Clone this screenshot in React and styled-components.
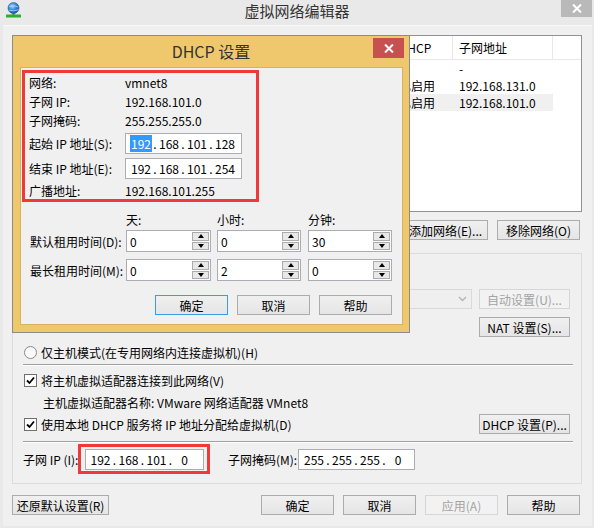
import React from 'react';
import styled, { createGlobalStyle } from 'styled-components';

const GlobalStyle = createGlobalStyle`
  * { box-sizing: border-box; }
  body {
    margin: 0;
    background: #e9e9e9;
    font-family: "Microsoft YaHei", "Noto Sans CJK SC", "Noto Sans", sans-serif;
    font-size: 12px;
    color: #000;
  }
`;

const Window = styled.div`
  position: relative;
  width: 594px;
  height: 528px;
  background: #e9e9e9;
  display: flex;
  flex-direction: column;
  overflow: hidden;
`;

const TitleBar = styled.div`
  height: 25px;
  display: grid;
  grid-template-columns: 1fr auto 1fr;
  align-items: start;
`;

const AppIcon = styled.svg`
  margin: 2px 0 0 6px;
`;

const Title = styled.div`
  font-size: 15px;
  line-height: 22px;
  color: #333;
  white-space: nowrap;
`;

const CloseBtn = styled.div`
  justify-self: end;
  width: 31px;
  height: ${(p) => (p.$red ? 20 : 17)}px;
  margin-right: ${(p) => (p.$red ? 5 : 2)}px;
  margin-top: ${(p) => (p.$red ? 2 : 0)}px;
  background: ${(p) => (p.$red ? '#c75050' : '#b9b9b9')};
  display: flex;
  align-items: center;
  justify-content: center;
`;

const Client = styled.div`
  flex: 1;
  margin: 0 2px 2px 3px;
  background: #f0f0f0;
  border-top: 1px solid #f8f8f8;
  padding: 9px 10px 0 9px;
  display: flex;
  flex-direction: column;
`;

const ListBox = styled.div`
  height: 177px;
  border: 1px solid #8f9296;
  background: #fff;
  overflow: hidden;
`;

const ListRow = styled.div`
  display: flex;
  height: ${(p) => (p.$head ? 24 : 17)}px;
  align-items: center;
  width: ${(p) => (p.$head ? 'auto' : '540px')};
  background: ${(p) => (p.$selected ? '#f0f0f0' : 'transparent')};
  border-bottom: ${(p) => (p.$head ? '1px solid #e5e9ef' : 'none')};
`;

const Cell = styled.div`
  width: ${(p) => p.$w}px;
  flex-shrink: 0;
  padding-left: 6px;
  white-space: nowrap;
  overflow: hidden;
  height: 100%;
  display: flex;
  align-items: center;
  border-right: ${(p) => (p.$head ? '1px solid #e8e8e8' : 'none')};
`;

const ButtonRow = styled.div`
  display: flex;
  justify-content: ${(p) => p.$justify || 'flex-end'};
  align-items: center;
  gap: 9px;
  margin-top: ${(p) => p.$mt || 0}px;
  padding-right: ${(p) => (p.$pr === undefined ? 2 : p.$pr)}px;
`;

const Group = styled.div`
  display: flex;
  gap: 9px;
`;

const Button = styled.button`
  width: ${(p) => p.$w}px;
  height: 20px;
  padding: 0;
  font: inherit;
  font-size: 12px;
  color: ${(p) => (p.disabled ? '#a3a3a3' : '#000')};
  border: 1px solid ${(p) => (p.$focus ? '#3c9be8' : p.disabled ? '#d6d6d6' : '#acacac')};
  background: ${(p) => (p.disabled ? '#f2f2f2' : 'linear-gradient(#f0f0f0, #e5e5e5)')};
  white-space: nowrap;
  display: flex;
  align-items: center;
  justify-content: center;
`;

const GroupBox = styled.div`
  position: relative;
  margin-top: 13px;
  width: 570px;
  height: 231px;
  border: 1px solid #dcdcdc;
  padding: 0 11px;
  display: flex;
  flex-direction: column;
`;

const GroupTitle = styled.span`
  position: absolute;
  top: -9px;
  left: 8px;
  padding: 0 2px;
  background: #f0f0f0;
  line-height: 17px;
`;

const Row = styled.div`
  height: ${(p) => p.$h}px;
  margin-top: ${(p) => p.$mt || 0}px;
  padding-left: ${(p) => p.$pl || 0}px;
  display: flex;
  align-items: center;
  justify-content: ${(p) => (p.$spread ? 'space-between' : 'flex-start')};
  white-space: nowrap;
`;

const Option = styled.label`
  display: flex;
  align-items: center;
  gap: 4px;
  align-self: ${(p) => (p.$top ? 'flex-start' : 'auto')};
  line-height: ${(p) => (p.$top ? '14px' : 'normal')};
`;

const Radio = styled.span`
  width: 13px;
  height: 13px;
  border-radius: 50%;
  border: 1px solid #8a8a8a;
  background: linear-gradient(#f4f4f4, #ffffff);
`;

const CheckBox = styled.span`
  width: 13px;
  height: 13px;
  border: 1px solid #707070;
  background: #fff;
  display: flex;
  align-items: center;
  justify-content: center;
`;

const Separator = styled.div`
  margin: ${(p) => p.$mt || 0}px -3px 0 -1px;
  height: 2px;
  border-top: 1px solid #a0a0a0;
  border-bottom: 1px solid #ffffff;
`;

const Select = styled.div`
  flex: 1;
  height: 20px;
  margin: 0 7px 0 8px;
  border: 1px solid #d9d9d9;
  background: #efefef;
  display: flex;
  align-items: center;
  justify-content: flex-end;
  padding-right: 4px;
`;

const FieldLabel = styled.span`
  width: ${(p) => p.$w}px;
  margin-left: ${(p) => p.$ml || 0}px;
  flex-shrink: 0;
  white-space: nowrap;
`;

const Highlight = styled.div`
  width: 132px;
  height: 30px;
  border: 3px solid #f03a3a;
  display: flex;
  align-items: center;
  justify-content: center;
  margin-right: 18px;
`;

const IpBox = styled.div`
  width: ${(p) => p.$w}px;
  height: 21px;
  flex-shrink: 0;
  border: 1px solid #abadb3;
  background: #fff;
  padding-left: 3px;
  display: flex;
  align-items: center;
`;

const IpField = styled.span`
  width: 24px;
  text-align: center;
`;

const IpDot = styled.span`
  width: 4px;
  text-align: center;
`;

const IpText = styled.span`
  background: ${(p) => (p.$selected ? '#3399ff' : 'transparent')};
  color: ${(p) => (p.$selected ? '#fff' : '#000')};
  padding: 0 1px;
  line-height: 15px;
`;

/* DHCP dialog, a second window lying over the editor */
const Dialog = styled.div`
  position: absolute;
  left: 12px;
  top: 35px;
  width: 398px;
  height: 298px;
  border: 1px solid #8c8c8c;
  background: #efc86d;
  display: flex;
  flex-direction: column;
`;

const DialogTitleBar = styled.div`
  height: 31px;
  display: grid;
  grid-template-columns: 1fr auto 1fr;
  align-items: start;
`;

const DialogTitle = styled.div`
  font-size: 16px;
  line-height: 31px;
  color: #333;
`;

const DialogClient = styled.div`
  flex: 1;
  margin: 0 6px 7px 7px;
  background: #f0f0f0;
  border: 1px solid #d8b35c;
  padding: 2px 0 0 1px;
  display: flex;
  flex-direction: column;
`;

const InfoBox = styled.div`
  width: 237px;
  height: 132px;
  border: 3px solid #f03a3a;
  padding-left: 4px;
  display: flex;
  flex-direction: column;
`;

const InfoRow = styled.div`
  display: flex;
  align-items: center;
  height: ${(p) => p.$h || 19}px;
  margin-top: ${(p) => p.$mt || 0}px;
  white-space: nowrap;
`;

const LeaseRow = styled.div`
  display: flex;
  align-items: center;
  height: ${(p) => p.$h || 22}px;
  margin-top: ${(p) => p.$mt || 0}px;
  padding-left: 8px;
  white-space: nowrap;
`;

const LeaseCol = styled.div`
  width: ${(p) => p.$w}px;
  margin-right: ${(p) => p.$mr || 0}px;
  flex-shrink: 0;
`;

const SpinBox = styled.div`
  width: ${(p) => p.$w}px;
  margin-right: ${(p) => p.$mr || 0}px;
  flex-shrink: 0;
  height: 22px;
  border: 1px solid #abadb3;
  background: #fff;
  padding: 1px 1px 1px 3px;
  display: flex;
  align-items: center;
  justify-content: space-between;
`;

const SpinButtons = styled.div`
  width: 17px;
  height: 100%;
  display: flex;
  flex-direction: column;
  gap: 1px;
`;

const SpinHalf = styled.div`
  flex: 1;
  border: 1px solid #acacac;
  background: #e8e8e8;
  display: flex;
  align-items: center;
  justify-content: center;
  &::after {
    content: '';
    border-left: 3px solid transparent;
    border-right: 3px solid transparent;
    ${(p) => (p.$up ? 'border-bottom: 4px solid #000;' : 'border-top: 4px solid #000;')}
  }
`;

const Ip = ({ parts, width, selected }) => (
  <IpBox $w={width}>
    {parts.map((part, i) => (
      <React.Fragment key={i}>
        {i > 0 && <IpDot>.</IpDot>}
        <IpField>
          <IpText $selected={selected === i}>{part}</IpText>
        </IpField>
      </React.Fragment>
    ))}
  </IpBox>
);

// day / hour / minute boxes: widths and gaps as in the dialog
const leaseCols = [
  { w: 85, mr: 6 },
  { w: 84, mr: 7 },
  { w: 84, mr: 0 },
];

const Spin = ({ value, col }) => (
  <SpinBox $w={col.w} $mr={col.mr}>
    <span>{value}</span>
    <SpinButtons>
      <SpinHalf $up />
      <SpinHalf />
    </SpinButtons>
  </SpinBox>
);

const Check = () => (
  <CheckBox>
    <svg width="9" height="9" viewBox="0 0 9 9">
      <path d="M1 4.5 L3.5 7 L8 1.5" fill="none" stroke="#000" strokeWidth="1.8" />
    </svg>
  </CheckBox>
);

const CloseX = () => (
  <svg width="10" height="9" viewBox="0 0 10 9">
    <path d="M1 0.5 L9 8.5 M9 0.5 L1 8.5" stroke="#fff" strokeWidth="2" />
  </svg>
);

const networks = [
  ['VMnet0', '桥接模式', '自动桥接', '-', '-', '-'],
  ['VMnet1', '仅主机模式', '-', '已连接', '已启用', '192.168.131.0'],
  ['VMnet8', 'NAT 模式', 'NAT 模式', '已连接', '已启用', '192.168.101.0'],
];

const columns = [
  { title: '名称', w: 80 },
  { title: '类型', w: 90 },
  { title: '外部连接', w: 120 },
  { title: '主机连接', w: 90 },
  { title: 'DHCP', w: 60 },
  { title: '子网地址', w: 100 },
];

const App = () => {
  return (
    <Window>
      <GlobalStyle />
      <TitleBar>
        <AppIcon width="15" height="16" viewBox="0 0 15 16">
          <defs>
            <radialGradient id="globe" cx="0.4" cy="0.35" r="0.7">
              <stop offset="0" stopColor="#9fd3ff" />
              <stop offset="0.5" stopColor="#3b86d8" />
              <stop offset="1" stopColor="#1d4f9c" />
            </radialGradient>
          </defs>
          <rect x="6.5" y="10" width="2" height="3" fill="#666" />
          <circle cx="7.5" cy="6" r="5.5" fill="url(#globe)" stroke="#2a5a9a" strokeWidth="0.6" />
          <path d="M3 4.5 C5 3.5 9 3.5 12 5 M3 8 C5 9 10 9 12.5 7.5" stroke="#bfe3ff" strokeWidth="0.7" fill="none" />
          <rect x="0" y="12.5" width="15" height="3" rx="0.5" fill="#27b02a" />
        </AppIcon>
        <Title>虚拟网络编辑器</Title>
        <CloseBtn>
          <CloseX />
        </CloseBtn>
      </TitleBar>

      <Client>
        <ListBox>
          <ListRow $head>
            {columns.map((c) => (
              <Cell key={c.title} $w={c.w} $head>{c.title}</Cell>
            ))}
          </ListRow>
          {networks.map((n, i) => (
            <ListRow key={n[0]} $selected={i === 2}>
              {n.map((v, j) => (
                <Cell key={j} $w={columns[j].w}>{v}</Cell>
              ))}
            </ListRow>
          ))}
        </ListBox>

        <ButtonRow $mt={8}>
          <Button $w={85}>添加网络(E)...</Button>
          <Button $w={83}>移除网络(O)</Button>
        </ButtonRow>

        <GroupBox>
          <GroupTitle>VMnet 信息</GroupTitle>
          <Row $h={18} $mt={9}>
            <Option><Radio />桥接模式(将虚拟机直接连接到外部网络)(B)</Option>
          </Row>
          <Row $h={20} $mt={8} $pl={19}>
            <span>已桥接至(G):</span>
            <Select>
              <svg width="9" height="6" viewBox="0 0 9 6">
                <path d="M1 1 L4.5 4.5 L8 1" fill="none" stroke="#b5b5b5" strokeWidth="1.4" />
              </svg>
            </Select>
            <Button $w={91} disabled>自动设置(U)...</Button>
          </Row>
          <Row $h={20} $mt={8} $spread>
            <Option $top><Radio />NAT 模式(与虚拟机共享主机的 IP 地址)(N)</Option>
            <Button $w={91}>NAT 设置(S)...</Button>
          </Row>
          <Row $h={18} $mt={6}>
            <Option><Radio />仅主机模式(在专用网络内连接虚拟机)(H)</Option>
          </Row>
          <Separator $mt={3} />
          <Row $h={18} $mt={5}>
            <Option><Check />将主机虚拟适配器连接到此网络(V)</Option>
          </Row>
          <Row $h={18} $mt={4} $pl={19}>
            主机虚拟适配器名称: VMware 网络适配器 VMnet8
          </Row>
          <Row $h={20} $mt={3} $spread>
            <Option><Check />使用本地 DHCP 服务将 IP 地址分配给虚拟机(D)</Option>
            <Button $w={91}>DHCP 设置(P)...</Button>
          </Row>
          <Separator $mt={7} />
          <Row $h={30} $mt={1}>
            <FieldLabel $w={55} $ml={-1}>子网 IP (I):</FieldLabel>
            <Highlight>
              <Ip parts={['192', '168', '101', '0']} width={119} />
            </Highlight>
            <FieldLabel $w={70}>子网掩码(M):</FieldLabel>
            <Ip parts={['255', '255', '255', '0']} width={117} />
          </Row>
        </GroupBox>

        <ButtonRow $mt={11} $justify="space-between">
          <Button $w={97}>还原默认设置(R)</Button>
          <Group>
            <Button $w={73}>确定</Button>
            <Button $w={73}>取消</Button>
            <Button $w={73} disabled>应用(A)</Button>
            <Button $w={73}>帮助</Button>
          </Group>
        </ButtonRow>
      </Client>

      <Dialog>
        <DialogTitleBar>
          <span />
          <DialogTitle>DHCP 设置</DialogTitle>
          <CloseBtn $red>
            <CloseX />
          </CloseBtn>
        </DialogTitleBar>
        <DialogClient>
          <InfoBox>
            <InfoRow><FieldLabel $w={96}>网络:</FieldLabel><span>vmnet8</span></InfoRow>
            <InfoRow><FieldLabel $w={96}>子网 IP:</FieldLabel><span>192.168.101.0</span></InfoRow>
            <InfoRow><FieldLabel $w={96}>子网掩码:</FieldLabel><span>255.255.255.0</span></InfoRow>
            <InfoRow $h={21} $mt={3}>
              <FieldLabel $w={96}>起始 IP 地址(S):</FieldLabel>
              <Ip parts={['192', '168', '101', '128']} width={117} selected={0} />
            </InfoRow>
            <InfoRow $h={21} $mt={4}>
              <FieldLabel $w={96}>结束 IP 地址(E):</FieldLabel>
              <Ip parts={['192', '168', '101', '254']} width={117} />
            </InfoRow>
            <InfoRow $h={18} $mt={2}>
              <FieldLabel $w={96}>广播地址:</FieldLabel><span>192.168.101.255</span>
            </InfoRow>
          </InfoBox>

          <LeaseRow $h={16} $mt={9}>
            <LeaseCol $w={96} />
            <LeaseCol $w={85} $mr={6}>天:</LeaseCol>
            <LeaseCol $w={84} $mr={7}>小时:</LeaseCol>
            <LeaseCol $w={84}>分钟:</LeaseCol>
          </LeaseRow>
          <LeaseRow $mt={3}>
            <LeaseCol $w={96}>默认租用时间(D):</LeaseCol>
            <Spin value="0" col={leaseCols[0]} />
            <Spin value="0" col={leaseCols[1]} />
            <Spin value="30" col={leaseCols[2]} />
          </LeaseRow>
          <LeaseRow $mt={7}>
            <LeaseCol $w={96}>最长租用时间(M):</LeaseCol>
            <Spin value="0" col={leaseCols[0]} />
            <Spin value="2" col={leaseCols[1]} />
            <Spin value="0" col={leaseCols[2]} />
          </LeaseRow>

          <ButtonRow $mt={14} $pr={10}>
            <Button $w={73} $focus>确定</Button>
            <Button $w={73}>取消</Button>
            <Button $w={73}>帮助</Button>
          </ButtonRow>
        </DialogClient>
      </Dialog>
    </Window>
  );
};

export default App;
